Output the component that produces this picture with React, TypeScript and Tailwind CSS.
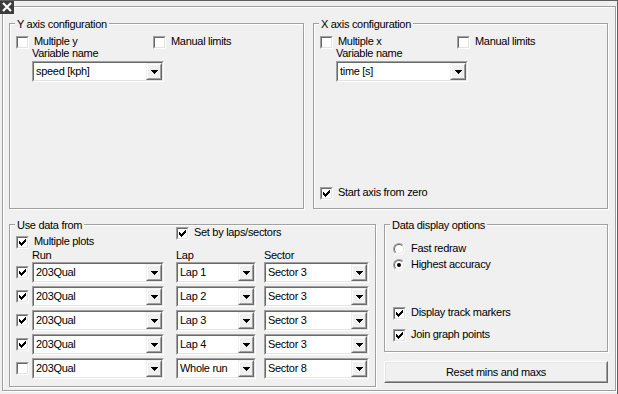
import React from "react";

function CheckMark() {
  return (
    <svg width="7" height="7" viewBox="0 0 7 7" shapeRendering="crispEdges" className="block">
      <path
        d="M0 2h1v3H0zM1 3h1v3H1zM2 4h1v3H2zM3 3h1v3H3zM4 2h1v3H4zM5 1h1v3H5zM6 0h1v3H6z"
        fill="#000"
      />
    </svg>
  );
}

function Check({ checked }: { checked?: boolean }) {
  return (
    <span className="block w-[13px] h-[13px] shrink-0 border border-t-[#a0a0a0] border-l-[#a0a0a0] border-r-white border-b-white">
      <span className="block w-full h-full bg-white border border-t-[#696969] border-l-[#696969] border-r-[#e3e3e3] border-b-[#e3e3e3] p-[1px]">
        {checked && <CheckMark />}
      </span>
    </span>
  );
}

function CheckRow({
  checked,
  label,
  className = "",
}: {
  checked?: boolean;
  label: string;
  className?: string;
}) {
  return (
    <div className={`flex items-center gap-[5px] h-[13px] ${className}`}>
      <Check checked={checked} />
      <span className="whitespace-nowrap mb-[2px]">{label}</span>
    </div>
  );
}

function Radio({ checked }: { checked?: boolean }) {
  return (
    <span className="block w-[12px] h-[12px] shrink-0 rounded-full border border-t-[#a0a0a0] border-l-[#a0a0a0] border-r-white border-b-white">
      <span className="flex items-center justify-center w-full h-full rounded-full bg-white border border-t-[#696969] border-l-[#696969] border-r-[#e3e3e3] border-b-[#e3e3e3]">
        {checked && <span className="block w-[4px] h-[4px] rounded-full bg-black" />}
      </span>
    </span>
  );
}

function RadioRow({
  checked,
  label,
  className = "",
}: {
  checked?: boolean;
  label: string;
  className?: string;
}) {
  return (
    <div className={`flex items-center gap-[6px] h-[13px] ${className}`}>
      <Radio checked={checked} />
      <span className="whitespace-nowrap">{label}</span>
    </div>
  );
}

function DropBtn() {
  return (
    <span className="flex w-[16px] h-full shrink-0 border border-t-[#f0f0f0] border-l-[#f0f0f0] border-r-[#696969] border-b-[#696969]">
      <span className="flex flex-1 items-center justify-center bg-[#f0f0f0] border border-t-white border-l-white border-r-[#a0a0a0] border-b-[#a0a0a0]">
        <svg width="7" height="4" viewBox="0 0 7 4" shapeRendering="crispEdges" className="block">
          <path d="M0 0h7v1H0zM1 1h5v1H1zM2 2h3v1H2zM3 3h1v1H3z" fill="#000" />
        </svg>
      </span>
    </span>
  );
}

function Combo({ value, className = "" }: { value: string; className?: string }) {
  return (
    <div
      className={`h-[21px] shrink-0 border border-t-[#a0a0a0] border-l-[#a0a0a0] border-r-white border-b-white ${className}`}
    >
      <div className="flex h-full bg-white border border-t-[#696969] border-l-[#696969] border-r-[#e3e3e3] border-b-[#e3e3e3]">
        <span className="flex-1 min-w-0 pl-[2px] leading-[17px] whitespace-nowrap overflow-hidden">
          {value}
        </span>
        <DropBtn />
      </div>
    </div>
  );
}

function Group({
  title,
  className = "",
  children,
}: {
  title: string;
  className?: string;
  children?: React.ReactNode;
}) {
  return (
    <div
      className={`relative flex flex-col shrink-0 border border-[#a0a0a0] shadow-[1px_1px_0_#fff,inset_1px_1px_0_#fff] ${className}`}
    >
      <span className="absolute -top-[6px] left-[5px] px-[2px] bg-[#f0f0f0] whitespace-nowrap">
        {title}
      </span>
      {children}
    </div>
  );
}

function AxisGroup({
  title,
  multi,
  variable,
  startZero,
}: {
  title: string;
  multi: string;
  variable: string;
  startZero?: boolean;
}) {
  return (
    <Group title={title} className="w-[295px] h-[186px]">
      <div className="flex items-center h-[13px] mt-[12px] ml-[6px]">
        <CheckRow label={multi} className="w-[137px]" />
        <CheckRow label="Manual limits" />
      </div>
      <div className="ml-[22px] -mt-[2px]">Variable name</div>
      <Combo value={variable} className="ml-[22px] mt-[1px] w-[132px]" />
      {startZero && (
        <CheckRow checked label="Start axis from zero" className="mt-auto mb-[8px] ml-[6px]" />
      )}
    </Group>
  );
}

const rows = [
  { checked: true, run: "203Qual", lap: "Lap 1", sector: "Sector 3" },
  { checked: true, run: "203Qual", lap: "Lap 2", sector: "Sector 3" },
  { checked: true, run: "203Qual", lap: "Lap 3", sector: "Sector 3" },
  { checked: true, run: "203Qual", lap: "Lap 4", sector: "Sector 3" },
  { checked: false, run: "203Qual", lap: "Whole run", sector: "Sector 8" },
];

export default function App() {
  return (
    <div className="relative w-[618px] h-[394px] bg-[#f0f0f0] border-t border-r border-[#5f5f5f] pl-[2px] pt-[5px] text-[11px] leading-[13px] tracking-[-0.3px] text-black font-['Liberation_Sans',Arial,sans-serif] overflow-hidden">
      <div className="absolute left-0 -top-[1px] w-[14px] h-[14px] bg-[#3c3c3c] flex items-center justify-center z-10">
        <svg width="10" height="10" viewBox="0 0 10 10" className="block">
          <path d="M1 1L9 9M9 1L1 9" stroke="#fff" strokeWidth="2.2" />
        </svg>
      </div>
      <div className="flex flex-col w-[614px] h-[385px] border border-[#a0a0a0] shadow-[1px_1px_0_#fff,inset_1px_1px_0_#fff] pl-[6px] pt-[16px]">
        <div className="flex gap-[9px]">
          <AxisGroup title="Y axis configuration" multi="Multiple y" variable="speed [kph]" />
          <AxisGroup title="X axis configuration" multi="Multiple x" variable="time [s]" startZero />
        </div>
        <div className="flex gap-[8px] mt-[15px]">
          <Group title="Use data from" className="w-[367px] h-[163px]">
            <div className="flex items-start ml-[6px]">
              <CheckRow checked label="Multiple plots" className="mt-[11px] w-[160px]" />
              <CheckRow checked label="Set by laps/sectors" className="mt-[2px]" />
            </div>
            <div className="flex ml-[22px] h-[13px]">
              <span className="w-[144px]">Run</span>
              <span className="w-[88px]">Lap</span>
              <span>Sector</span>
            </div>
            <div className="flex flex-col gap-[3px] ml-[6px]">
              {rows.map((r, i) => (
                <div key={i} className="flex items-center h-[21px]">
                  <Check checked={r.checked} />
                  <Combo value={r.run} className="ml-[3px] w-[132px]" />
                  <Combo value={r.lap} className="ml-[12px] w-[80px]" />
                  <Combo value={r.sector} className="ml-[8px] w-[105px]" />
                </div>
              ))}
            </div>
          </Group>
          <div className="flex flex-col w-[224px]">
            <Group title="Data display options" className="h-[128px]">
              <div className="flex flex-col ml-[8px] mt-[17px]">
                <RadioRow label="Fast redraw" />
                <RadioRow checked label="Highest accuracy" className="mt-[3px]" />
                <CheckRow checked label="Display track markers" className="mt-[36px]" />
                <CheckRow checked label="Join graph points" className="mt-[9px]" />
              </div>
            </Group>
            <button className="mt-[9px] h-[22px] w-full border border-t-white border-l-white border-r-[#696969] border-b-[#696969] bg-[#f0f0f0] p-0">
              <span className="flex h-full items-center justify-center border border-t-[#e3e3e3] border-l-[#e3e3e3] border-r-[#a0a0a0] border-b-[#a0a0a0]">
                Reset mins and maxs
              </span>
            </button>
          </div>
        </div>
      </div>
    </div>
  );
}
